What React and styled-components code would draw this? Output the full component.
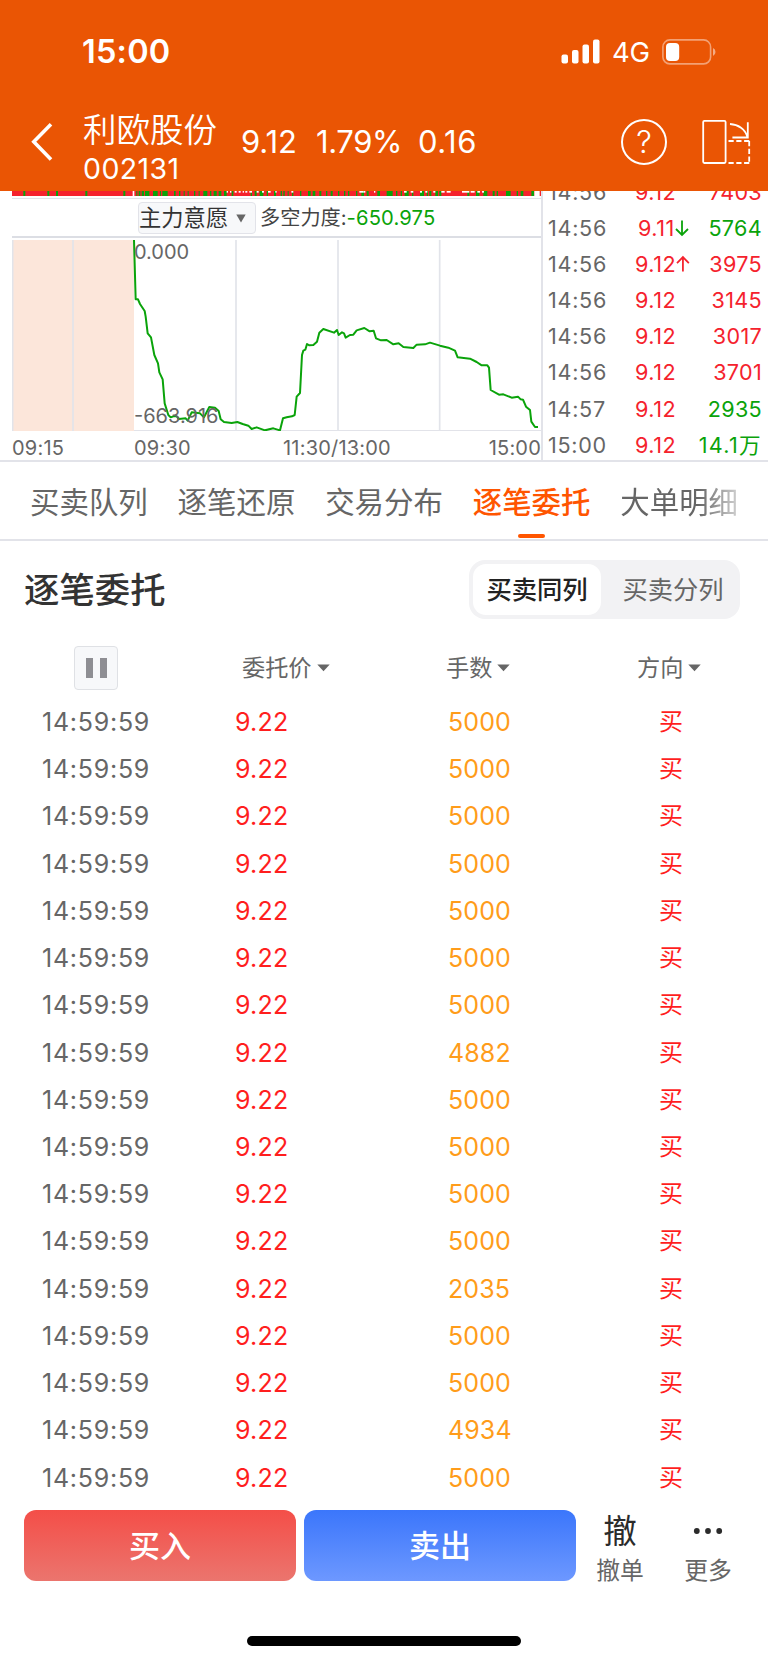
import React from "react";
import styled, { createGlobalStyle } from "styled-components";

const RED = "#f5222d";
const GREEN = "#0aa30a";
const GREY = "#666666";
const BORDER = "#e2e3e9";

const GlobalStyle = createGlobalStyle`
  * { box-sizing: border-box; }
  html, body { margin: 0; padding: 0; background: #fff; }
  body { font-family: Inter, "Noto Sans CJK SC", sans-serif; }
`;

const Screen = styled.div`
  width: 768px;
  height: 1663px;
  overflow: hidden;
  display: flex;
  flex-direction: column;
  background: #fff;
`;

/* ---------- header ---------- */
const Header = styled.header`
  flex: none;
  height: 191px;
  background: #ea5504;
  color: #fff;
`;
const StatusBar = styled.div`
  height: 103px;
  padding: 0 52px 0 82px;
  display: flex;
  align-items: center;
`;
const Clock = styled.span`
  flex: 1;
  font-size: 32.5px;
  font-weight: 600;
  line-height: 40px;
  letter-spacing: 0.2px;
`;
const Network = styled.span`
  width: 38px;
  margin: 0 12px;
  font-size: 27.5px;
  line-height: 40px;
  padding-top: 1px;
  font-weight: 400;
  letter-spacing: -0.2px;
`;
const NavBar = styled.div`
  height: 88px;
  padding: 0 17px 0 31px;
  display: flex;
  align-items: flex-start;
`;
const BackIcon = styled.svg`
  margin: 19px 30px 0 0;
  flex: none;
`;
const StockName = styled.div`
  width: 158px;
  flex: none;
`;
const NameText = styled.div`
  margin-top: 8px;
  font-size: 33.5px;
  line-height: 38px;
  font-weight: 350;
`;
const CodeText = styled.div`
  margin-top: 4px;
  font-size: 28.5px;
  line-height: 32px;
  letter-spacing: 0.4px;
`;
const Quote = styled.span`
  width: ${(p) => p.$w}px;
  flex: none;
  margin-top: 19px;
  font-size: 31px;
  line-height: 40px;
  letter-spacing: ${(p) => p.$ls}px;
  white-space: nowrap;
`;
const NavIcons = styled.div`
  margin-left: auto;
  display: flex;
  gap: 35px;
  padding-top: 16px;
`;
const HelpBadge = styled.div`
  width: 46px;
  height: 46px;
  border: 2px solid #fff;
  border-radius: 50%;
  text-align: center;
  font-size: 31px;
  font-weight: 300;
  line-height: 42px;
`;

/* ---------- chart ---------- */
const Market = styled.section`
  flex: none;
  height: 271px;
  display: flex;
  border-bottom: 2px solid ${BORDER};
  overflow: hidden;
`;
const ChartPane = styled.div`
  width: 543px;
  padding-left: 12px;
  border-right: 2px solid ${BORDER};
`;
const StripSvg = styled.svg`
  display: block;
`;
const IndicatorBar = styled.div`
  margin-top: 2px;
  height: 40px;
  border-top: 1px solid ${BORDER};
  border-bottom: 2px solid #dcdee4;
  padding: 1px 0 0 126px;
  display: flex;
  align-items: center;
`;
const IndicatorSelect = styled.div`
  width: 118px;
  height: 32px;
  border: 1px solid ${BORDER};
  border-radius: 4px;
  background: #f7f8fa;
  color: #333;
  font-size: 22.3px;
  line-height: 30px;
  display: flex;
  align-items: center;
  gap: 8px;
`;
const IndicatorText = styled.span`
  margin-left: 4px;
  font-size: 20.2px;
  line-height: 30px;
  color: #444;
  white-space: nowrap;
`;
const IndicatorValue = styled.span`
  color: ${GREEN};
  letter-spacing: 0.15px;
`;
const PlotArea = styled.div`
  position: relative;
  height: 193px;
  padding-top: 2px;
  border-bottom: 1px solid ${BORDER};
`;
const PlotSvg = styled.svg`
  display: block;
`;
const ScaleLabel = styled.span`
  position: absolute;
  left: 122px;
  ${(p) => (p.$low ? "bottom: 1px" : "top: 1px")};
  font-size: 20px;
  line-height: 26px;
  color: ${GREY};
`;
const TimeAxis = styled.div`
  display: grid;
  grid-template-columns: 122px 149px 1fr auto;
  font-size: 20px;
  line-height: 29px;
  padding-top: 3px;
  letter-spacing: 0.2px;
  color: ${GREY};
`;
const TickList = styled.div`
  flex: 1;
  padding: 0 6px 0 5px;
  margin-top: -17px;
`;
const TickRow = styled.div`
  height: 36.1px;
  line-height: 36.1px;
  font-size: 21.6px;
  display: grid;
  grid-template-columns: 82px 60px 1fr;
  letter-spacing: 0.5px;
`;
const TickTime = styled.span`
  color: ${GREY};
  letter-spacing: 0.7px;
`;
const TickPrice = styled.span`
  color: ${(p) => (p.$down ? GREEN : RED)};
  display: flex;
  align-items: center;
  padding-left: ${(p) => (p.$indent ? 8 : 5)}px;
`;
const PriceText = styled.span`
  color: ${RED};
`;
const TickVolume = styled.span`
  text-align: right;
  white-space: nowrap;
  letter-spacing: ${(p) => (p.$wide ? 1.3 : 0.3)}px;
  color: ${(p) => (p.$down ? GREEN : RED)};
`;

/* ---------- tabs ---------- */
const Tabs = styled.nav`
  flex: none;
  height: 79px;
  padding-left: 30px;
  border-bottom: 2px solid ${BORDER};
  display: flex;
  gap: 29.8px;
`;
const Tab = styled.div`
  position: relative;
  height: 77px;
  padding-top: 20px;
  font-size: 29.45px;
  line-height: 40px;
  color: ${(p) => (p.$active ? "#ff5500" : GREY)};
  font-weight: ${(p) => (p.$active ? 500 : 400)};
  white-space: nowrap;
  ${(p) => p.$fade && "mask-image: linear-gradient(90deg, #000 66%, rgba(0,0,0,0.3) 100%);"}
  ${(p) =>
    p.$active &&
    `&::after {
      content: "";
      position: absolute;
      left: 45px;
      bottom: 1px;
      width: 27px;
      height: 4px;
      border-radius: 2px;
      background: #ff5500;
    }`}
`;

/* ---------- order list ---------- */
const SectionHead = styled.div`
  flex: none;
  height: 97px;
  padding: 0 28px 0 24px;
  display: flex;
  align-items: center;
  justify-content: space-between;
`;
const Title = styled.h2`
  margin: 0;
  padding-top: 2px;
  font-size: 35.4px;
  line-height: 44px;
  font-weight: 500;
  color: #333;
`;
const Segmented = styled.div`
  width: 271px;
  height: 59px;
  border-radius: 16px;
  background: #f2f2f4;
  padding: 4px;
  display: flex;
`;
const Segment = styled.div`
  flex: none;
  width: ${(p) => (p.$on ? 128 : 144)}px;
  height: 51px;
  border-radius: 13px;
  text-align: center;
  font-size: 25.3px;
  line-height: 51px;
  background: ${(p) => (p.$on ? "#fff" : "transparent")};
  color: ${(p) => (p.$on ? "#222" : GREY)};
  font-weight: ${(p) => (p.$on ? 500 : 400)};
`;
const ColumnHead = styled.div`
  flex: none;
  height: 61px;
  padding-bottom: 2px;
  display: grid;
  grid-template-columns: 242px 204px 191px 1fr;
  align-items: center;
`;
const PauseButton = styled.div`
  width: 44px;
  height: 44px;
  margin-left: 74px;
  border: 1.5px solid #dfe1e5;
  border-radius: 4px;
  background: #f7f8fa;
  display: flex;
  align-items: center;
  justify-content: center;
  gap: 7px;
`;
const PauseMark = styled.span`
  width: 7px;
  height: 20px;
  background: #8e8e93;
`;
const SortLabel = styled.div`
  display: flex;
  align-items: center;
  gap: 5px;
  font-size: 23.2px;
  line-height: 32px;
  color: ${GREY};
`;
const Orders = styled.div`
  flex: none;
  height: 811px;
`;
const OrderRow = styled.div`
  height: 47.23px;
  line-height: 47.23px;
  font-size: 25px;
  display: grid;
  grid-template-columns: 193px 212px 212px 1fr;
  padding-left: 42px;
`;
const OrderTime = styled.span`
  color: ${GREY};
  letter-spacing: 0.75px;
`;
const OrderPrice = styled.span`
  color: #ff1e1e;
  letter-spacing: 0.2px;
`;
const OrderLots = styled.span`
  color: #ff9c1a;
  padding-left: 1px;
  letter-spacing: 0.1px;
`;
const OrderSide = styled.span`
  color: #ff1e1e;
  font-size: 24px;
  line-height: 45px;
`;

/* ---------- footer ---------- */
const ActionBar = styled.footer`
  flex: none;
  height: 126px;
  padding-left: 24px;
  display: flex;
  align-items: flex-start;
`;
const TradeButton = styled.div`
  width: 272px;
  height: 71px;
  margin-right: 8px;
  border-radius: 12px;
  text-align: center;
  color: #fff;
  font-size: 31px;
  line-height: 71px;
  font-weight: 500;
  background: ${(p) =>
    p.$sell
      ? "linear-gradient(#3b76fb, #6d98ff)"
      : "linear-gradient(#f44e48, #eb756e)"};
`;
const ToolItem = styled.div`
  width: 88px;
  margin-left: ${(p) => p.$ml || 0}px;
  display: flex;
  flex-direction: column;
  align-items: center;
  font-size: 23.8px;
  line-height: 32px;
  color: ${GREY};
`;
const ToolGlyph = styled.span`
  height: 41px;
  display: flex;
  align-items: center;
  font-size: 33.5px;
  color: #2b2b2b;
  margin-bottom: 4px;
`;
const HomeIndicator = styled.div`
  flex: none;
  width: 274px;
  height: 10px;
  margin-left: 247px;
  border-radius: 5px;
  background: #000;
`;

/* Bars of the bid/ask strip, three units per pixel: [start, end]. */
const STRIP_GREEN = [
  [70, 76], [142, 148], [168, 174], [256, 262], [370, 376], [409, 412], [416, 421],
  [425, 432], [435, 448], [459, 473], [480, 483], [487, 503], [522, 527], [537, 541],
  [551, 554], [563, 566], [582, 586], [596, 599], [610, 622], [630, 634], [641, 650],
  [656, 664], [672, 680], [695, 700], [752, 756], [764, 770], [779, 790], [800, 804],
  [822, 828], [842, 846], [850, 854], [863, 866], [876, 880], [900, 904], [924, 932],
  [938, 946], [958, 964], [978, 982], [992, 998], [1014, 1018], [1032, 1036],
  [1044, 1048], [1068, 1072], [1084, 1092], [1100, 1106], [1132, 1140], [1160, 1178],
  [1188, 1192], [1202, 1206], [1214, 1226], [1236, 1240], [1260, 1272], [1280, 1284],
  [1288, 1294], [1306, 1314], [1318, 1324], [1402, 1408], [1428, 1438], [1450, 1462],
  [1478, 1484], [1490, 1494], [1518, 1532], [1550, 1554], [1562, 1570], [1594, 1602],
];
const STRIP_NOTCHES = [
  [680, 4], [690, 4], [704, 6], [716, 6], [728, 4], [736, 6], [748, 8], [770, 6],
  [786, 6], [804, 8], [826, 4], [874, 6], [1078, 12], [1090, 6], [1122, 4],
  [1212, 8], [1232, 8], [1260, 6], [1276, 6], [1300, 6], [1324, 10], [1340, 12],
  [1386, 22], [1412, 12], [1432, 8], [1446, 6],
];

const LINE =
  "402,165 407,343 414,343 420,357 434,378 437,395 443,445 453,457 463,510 474,535 478,562 488,583 494,655 505,690 512,697 520,694 530,694 537,702 557,700 563,707 575,682 600,685 612,697 628,666 645,668 656,678 662,703 672,711 695,714 712,711 728,717 745,722 755,732 770,727 795,736 820,730 840,736 849,700 860,697 876,694 884,690 890,635 900,624 906,510 910,497 916,494 921,477 928,481 940,480 951,470 958,443 970,432 1002,443 1011,435 1016,450 1026,442 1032,445 1037,458 1050,450 1060,449 1070,436 1093,429 1109,439 1121,437 1128,460 1143,466 1160,465 1180,478 1196,475 1210,486 1240,489 1250,479 1275,478 1290,473 1320,482 1345,488 1365,497 1373,517 1410,521 1430,531 1445,541 1462,541 1467,548 1472,615 1497,629 1510,628 1535,638 1554,635 1562,643 1569,644 1578,665 1590,675 1594,710 1605,726 1614,726";

const TICKS = [
  ["14:56", "9.12", "", "7403", false],
  ["14:56", "9.11", "down", "5764", true],
  ["14:56", "9.12", "up", "3975", false],
  ["14:56", "9.12", "", "3145", false],
  ["14:56", "9.12", "", "3017", false],
  ["14:56", "9.12", "", "3701", false],
  ["14:57", "9.12", "", "2935", true],
  ["15:00", "9.12", "", "14.1万", true],
];

const TABS = ["买卖队列", "逐笔还原", "交易分布", "逐笔委托", "大单明细"];
const LOTS = [
  5000, 5000, 5000, 5000, 5000, 5000, 5000, 4882, 5000,
  5000, 5000, 5000, 2035, 5000, 5000, 4934, 5000,
];

const SignalIcon = () => (
  <svg width="39" height="25" viewBox="0 0 39 25" fill="#fff">
    <rect x="0.5" y="15.5" width="6.5" height="9" rx="2" />
    <rect x="11" y="11" width="6.5" height="13.5" rx="2" />
    <rect x="21.5" y="5.5" width="6.5" height="19" rx="2" />
    <rect x="32" y="0.5" width="6.5" height="24" rx="2" />
  </svg>
);

const BatteryIcon = () => (
  <svg width="54" height="26" viewBox="0 0 54 26">
    <rect x="0.9" y="0.9" width="47.7" height="24" rx="7" fill="none" stroke="#fff" strokeOpacity="0.45" strokeWidth="1.6" />
    <path d="M51 9q2.5 1.2 2.5 4t-2.5 4z" fill="#fff" fillOpacity="0.5" />
    <rect x="4" y="4" width="13.2" height="18" rx="4" fill="#fff" />
  </svg>
);

const RotateIcon = () => (
  <svg width="49" height="46" viewBox="0 0 49 46" fill="none" stroke="#fff" strokeWidth="1.8">
    <rect x="1.2" y="1.8" width="22.4" height="42.2" rx="1.2" />
    <path d="M28 5C36 5.5 43.5 10 45.5 18.5M45.8 3.3V18.5H30.4" />
    <path d="M26.5 22H48M26.5 44H48M47.2 22V44" strokeDasharray="5.2 2.6" />
  </svg>
);

const ArrowIcon = ({ down }) => (
  <svg width="14" height="18" viewBox="0 0 14 18" fill="none" stroke={down ? GREEN : RED} strokeWidth="1.8">
    <path d={down ? "M7 1.5V16M1 10l6 6 6-6" : "M7 16.5V2M1 8l6-6 6 6"} />
  </svg>
);

const Caret = () => (
  <svg width="13" height="8" viewBox="0 0 13 8" fill="#666">
    <path d="M0.3 0.5H12.7L6.5 7.3z" />
  </svg>
);

export default function App() {
  return (
    <Screen>
      <GlobalStyle />
      <Header>
        <StatusBar>
          <Clock>15:00</Clock>
          <SignalIcon />
          <Network>4G</Network>
          <BatteryIcon />
        </StatusBar>
        <NavBar>
          <BackIcon width="22" height="40" viewBox="0 0 22 40" fill="none" stroke="#fff" strokeWidth="3.6">
            <path d="M20 2.2L2.8 19.7L20 37.4" />
          </BackIcon>
          <StockName>
            <NameText>利欧股份</NameText>
            <CodeText>002131</CodeText>
          </StockName>
          <Quote $w={75} $ls={-0.1}>9.12</Quote>
          <Quote $w={102} $ls={-0.4}>1.79%</Quote>
          <Quote $w={60} $ls={0.5}>0.16</Quote>
          <NavIcons>
            <HelpBadge>?</HelpBadge>
            <RotateIcon />
          </NavIcons>
        </NavBar>
      </Header>

      <Market>
        <ChartPane>
          <StripSvg width="529" height="5" viewBox="36 0 1587 15" preserveAspectRatio="none">
            <rect x="36" width="1567" height="15" fill={RED} />
            {STRIP_GREEN.map(([a, b]) => (
              <rect key={a} x={a} width={b - a} height="15" fill={GREEN} />
            ))}
            {STRIP_NOTCHES.map(([x, w]) => (
              <rect key={x} x={x} width={w} height="5" fill="#fff" />
            ))}
            <rect x="398" width="5" height="15" fill="#fff" />
            <rect x="1619" width="4" height="15" fill={RED} />
          </StripSvg>
          <IndicatorBar>
            <IndicatorSelect>
              主力意愿
              <svg width="10" height="9" viewBox="0 0 10 9" fill="#666">
                <path d="M0.3 0.5H9.7L5 8.5z" />
              </svg>
            </IndicatorSelect>
            <IndicatorText>
              多空力度:<IndicatorValue>-650.975</IndicatorValue>
            </IndicatorText>
          </IndicatorBar>
          <PlotArea>
            <PlotSvg width="529" height="191" viewBox="36 165 1587 573" preserveAspectRatio="none">
              <rect x="36" y="165" width="366" height="573" fill="#fce6da" />
              <g stroke="#e2e4ea" strokeWidth="5">
                <path d="M38 165V738M219 165V738M708 165V738M1014 165V738M1319 165V738" />
              </g>
              <polyline points={LINE} fill="none" stroke={GREEN} strokeWidth="6" strokeLinejoin="round" />
            </PlotSvg>
            <ScaleLabel>0.000</ScaleLabel>
            <ScaleLabel $low>-663.916</ScaleLabel>
          </PlotArea>
          <TimeAxis>
            <span>09:15</span>
            <span>09:30</span>
            <span>11:30/13:00</span>
            <span>15:00</span>
          </TimeAxis>
        </ChartPane>
        <TickList>
          {TICKS.map(([time, price, dir, vol, down], i) => (
            <TickRow key={i}>
              <TickTime>{time}</TickTime>
              <TickPrice $indent={dir === "down"}>
                <PriceText>{price}</PriceText>
                {dir && <ArrowIcon down={dir === "down"} />}
              </TickPrice>
              <TickVolume $down={down} $wide={vol.endsWith("万")}>{vol}</TickVolume>
            </TickRow>
          ))}
        </TickList>
      </Market>

      <Tabs>
        {TABS.map((label, i) => (
          <Tab key={label} $active={i === 3} $fade={i === 4}>
            {label}
          </Tab>
        ))}
      </Tabs>

      <SectionHead>
        <Title>逐笔委托</Title>
        <Segmented>
          <Segment $on>买卖同列</Segment>
          <Segment>买卖分列</Segment>
        </Segmented>
      </SectionHead>

      <ColumnHead>
        <PauseButton>
          <PauseMark />
          <PauseMark />
        </PauseButton>
        <SortLabel>委托价<Caret /></SortLabel>
        <SortLabel>手数<Caret /></SortLabel>
        <SortLabel>方向<Caret /></SortLabel>
      </ColumnHead>

      <Orders>
        {LOTS.map((lots, i) => (
          <OrderRow key={i}>
            <OrderTime>14:59:59</OrderTime>
            <OrderPrice>9.22</OrderPrice>
            <OrderLots>{lots}</OrderLots>
            <OrderSide>买</OrderSide>
          </OrderRow>
        ))}
      </Orders>

      <ActionBar>
        <TradeButton>买入</TradeButton>
        <TradeButton $sell>卖出</TradeButton>
        <ToolItem $ml={-8}>
          <ToolGlyph>撤</ToolGlyph>
          撤单
        </ToolItem>
        <ToolItem>
          <ToolGlyph>
            <svg width="30" height="8" viewBox="0 0 30 8" fill="#2b2b2b">
              <circle cx="3.8" cy="4" r="2.9" />
              <circle cx="15" cy="4" r="2.9" />
              <circle cx="26.2" cy="4" r="2.9" />
            </svg>
          </ToolGlyph>
          更多
        </ToolItem>
      </ActionBar>
      <HomeIndicator />
    </Screen>
  );
}
